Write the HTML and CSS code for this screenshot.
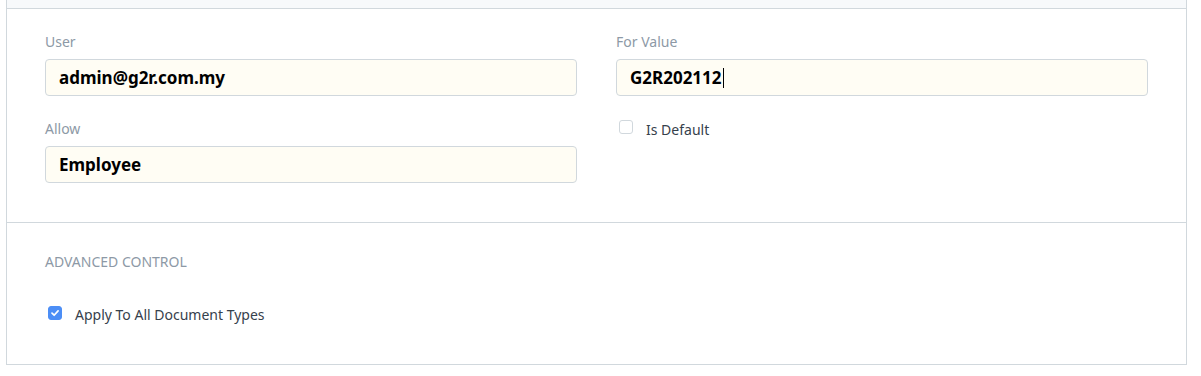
FILE: index.html
```html
<!DOCTYPE html>
<html lang="en">
  <head>
    <meta charset="UTF-8" />
    <meta name="viewport" content="width=device-width, initial-scale=1.0" />
    <title>User Permission</title>
    <link rel="stylesheet" href="styles.css">
  </head>
  <body>
    <div class="form-layout">
      <div class="form-head"></div>

      <div class="form-section">
        <div class="section-body">
          <div class="form-column">
            <div class="field">
              <label class="control-label">User</label>
              <div class="control-input">admin@g2r.com.my</div>
            </div>
            <div class="field">
              <label class="control-label">Allow</label>
              <div class="control-input">Employee</div>
            </div>
          </div>
          <div class="form-column">
            <div class="field">
              <label class="control-label">For Value</label>
              <div class="control-input">G2R202112<span class="caret"></span></div>
            </div>
            <div class="field">
              <label class="checkbox">
                <span class="check-box"></span>
                <span class="check-label">Is Default</span>
              </label>
            </div>
          </div>
        </div>
      </div>

      <div class="form-section">
        <div class="section-head">Advanced Control</div>
        <label class="checkbox">
          <span class="check-box checked">
            <svg viewBox="0 0 14 14" width="14" height="14">
              <path d="M3.5 7.2 L6 9.6 L10.6 4.6" fill="none" stroke="#fff" stroke-width="2" stroke-linecap="round" stroke-linejoin="round"></path>
            </svg>
          </span>
          <span class="check-label">Apply To All Document Types</span>
        </label>
      </div>
    </div>
  </body>
</html>
```

FILE: styles.css
```css
html,
body {
  margin: 0;
  background: #fff;
  font-family: "Noto Sans", "Open Sans", Arial, sans-serif;
}
.form-layout {
  margin-left: 6px;
  width: 1181px;
  box-sizing: border-box;
  border: 1px solid #d1d8dd;
  border-top: none;
}
.form-head {
  height: 8px;
  background: #f7f9fb;
  border-bottom: 1px solid #d1d8dd;
}
.form-section {
  padding: 24px 38px 39px;
  border-bottom: 1px solid #d1d8dd;
}
.form-section:last-child {
  border-bottom: none;
  padding-top: 30px;
  padding-bottom: 41px;
}
.section-body {
  display: grid;
  grid-template-columns: 1fr 1fr;
  gap: 39px;
}
.field + .field {
  margin-top: 24px;
}
.control-label {
  display: block;
  font-size: 14px;
  line-height: 18px;
  color: #8d99a6;
  margin-bottom: 8px;
}
.control-input {
  display: flex;
  align-items: center;
  height: 37px;
  box-sizing: border-box;
  padding: 0 13px;
  background: #fffdf4;
  border: 1px solid #d1d8dd;
  border-radius: 4px;
  font-size: 17px;
  font-weight: 700;
  color: #000;
}
.caret {
  display: inline-block;
  width: 1px;
  height: 20px;
  background: #000;
  margin-left: 1px;
}
.checkbox {
  display: flex;
  align-items: center;
  gap: 13px;
  padding-left: 3px;
  height: 18px;
  font-size: 14px;
  color: #36414c;
}
.check-box {
  display: flex;
  align-items: center;
  justify-content: center;
  width: 14px;
  height: 14px;
  box-sizing: border-box;
  border: 1px solid #d1d8dd;
  border-radius: 3px;
  background: #fff;
  margin-top: -4px;
}
.check-box.checked {
  background: #4c8ef6;
  border-color: #4c8ef6;
  margin-top: -2px;
}
.section-head {
  font-size: 14px;
  line-height: 18px;
  text-transform: uppercase;
  color: #8d99a6;
  margin-bottom: 34px;
}
```
